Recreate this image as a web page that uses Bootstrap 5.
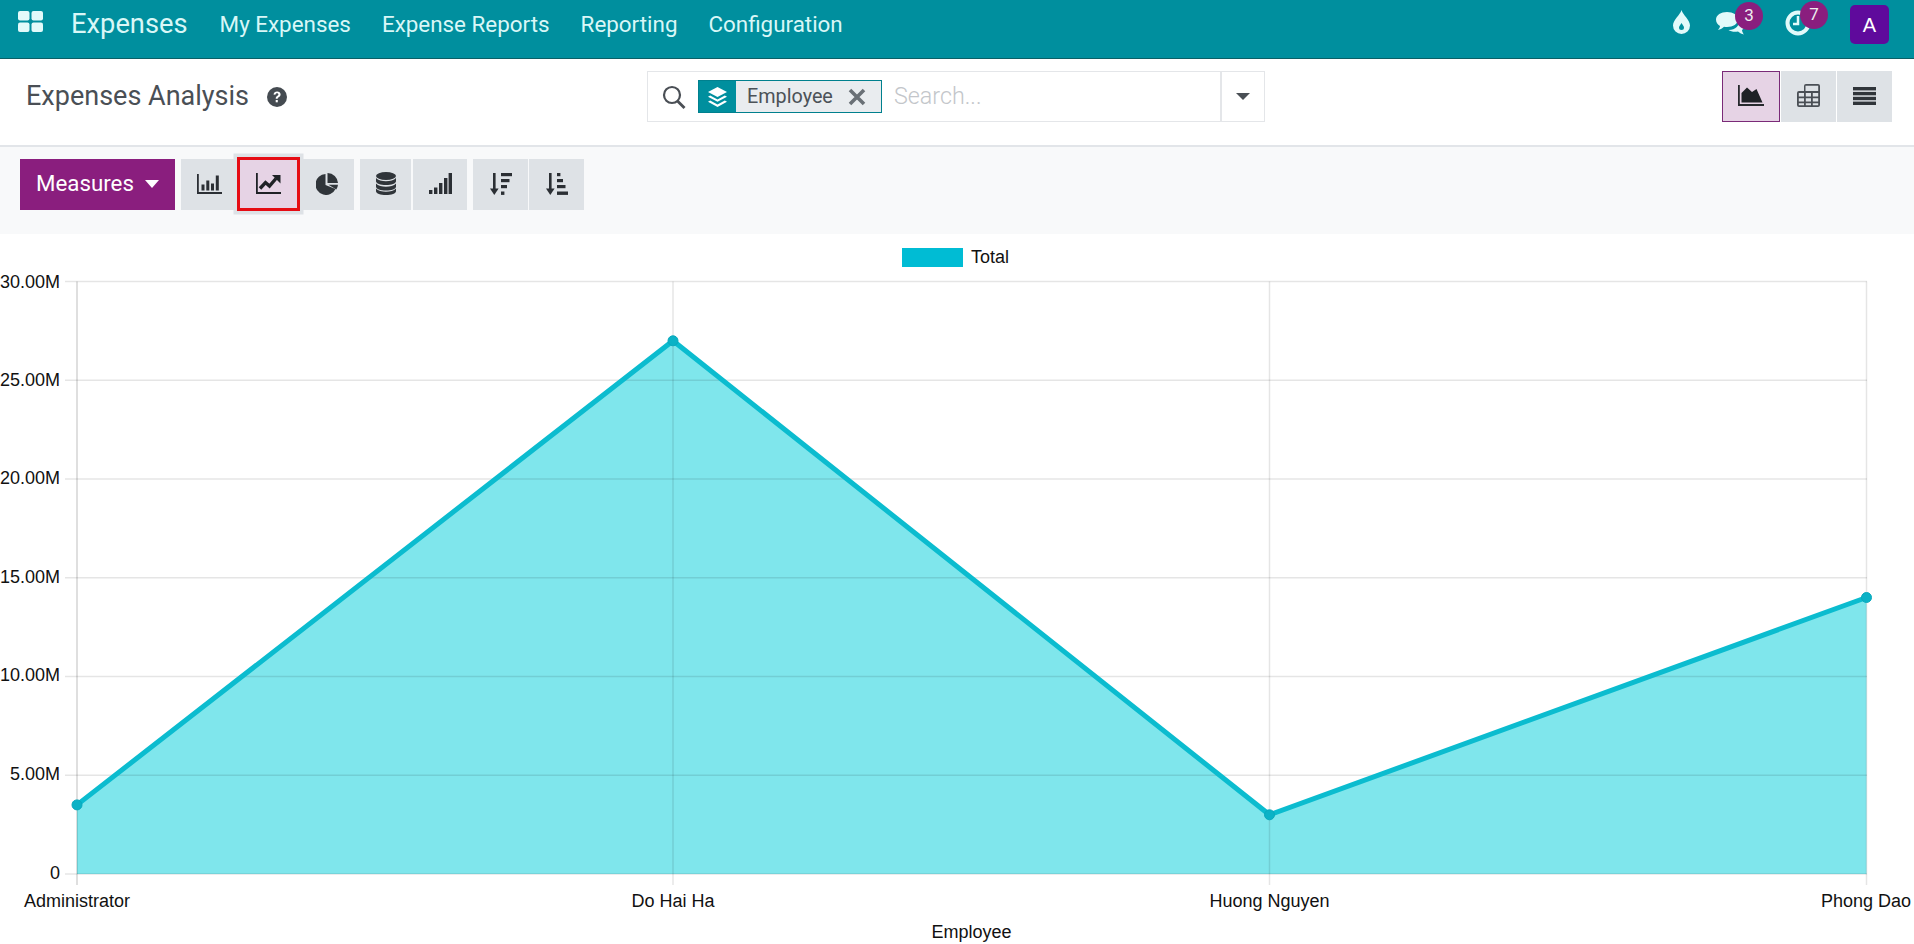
<!DOCTYPE html>
<html lang="en">
<head>
<meta charset="utf-8">
<title>Expenses Analysis</title>
<link rel="stylesheet" href="https://cdn.jsdelivr.net/npm/bootstrap@5.3.0/dist/css/bootstrap.min.css">
<style>
html,body{height:100%;overflow:hidden}
body{font-family:Roboto,"Liberation Sans",sans-serif;background:#fff;color:#4c4c4c}
.topbar{height:59px;background:#008f9e;border-bottom:1px solid #0b5f66;color:#d9f7f7;padding:0}
.topbar .navbar-nav{gap:0;align-self:start}
.apps{width:71px;height:58px;padding:9px 0 0 18px;align-self:start;display:block}
.app-name{font-size:27.300px;font-weight:400;color:#d9f7f7;padding:0;margin:0 32px 0 0;line-height:48px;align-self:start}
.menu-link{font-size:22.400px;font-weight:400;color:#d9f7f7!important;padding:0!important;margin-right:31px;line-height:48px}
.tray{align-self:start;position:relative;height:58px;width:241px;flex:none}
.tray-item{position:absolute}
.drop{left:0;top:10px}
.chat{left:43px;top:12px}
.clock{left:112px;top:10px}
.tray-badge{position:absolute;width:28px;height:28px;border-radius:50%;background:#8a1e7e;color:#eee;font-size:17px;line-height:26px;text-align:center;padding:0}
.b3{left:62px;top:2px}
.b7{left:127px;top:1px}
.avatar{position:absolute;left:177px;top:5px;width:39px;height:39px;border-radius:5px;background:#5f0a9c;color:#fff;font-size:20px;line-height:40px;text-align:center;font-family:"Liberation Sans",sans-serif}
.panel-top{height:88px;border-bottom:2px solid #e2e5e9;display:grid;grid-template-columns:647px 618px 1fr;align-items:start;padding-top:12px}
.page-title{font-size:27px;font-weight:400;color:#4a4f55;margin:0;padding-left:26px;line-height:51px;display:flex;align-items:center;gap:18px}
.search-box{height:51px;border:1.500px solid #e4e6e9;display:flex;align-items:stretch;background:#fff}
.search-ico{width:50px;flex:none;padding:12px 0 0 14px}
.facet{height:33px;margin-top:8px;border:1px solid #00808e;display:flex;flex:none;width:184px;background:#e9ecef;color:#4c5258}
.facet-ico{width:37px;background:#008f9e;display:flex;align-items:center;justify-content:center;flex:none}
.facet-txt{font-size:19.800px;line-height:31px;padding-left:11px;width:105px;flex:none}
.facet-x{display:flex;align-items:center;padding-left:7px}
.search-input.form-control{border:0;border-radius:0;font-size:23.300px;font-weight:300;padding:0 0 0 12px;box-shadow:none;background:transparent;font-family:Roboto,sans-serif;flex:1;min-width:0}
.search-input::placeholder{color:#c3c6ca;opacity:1}
.search-caret{width:44px;flex:none;border-left:2px solid #e4e6e9;display:flex;align-items:center;justify-content:center}
.caret-d{width:0;height:0;border-left:7px solid transparent;border-right:7px solid transparent;border-top:7px solid #4a4f55}
.caret-w{width:0;height:0;border-left:7.500px solid transparent;border-right:7.500px solid transparent;border-top:8px solid #fff;margin-left:11px}
.views{display:flex;justify-content:flex-end;padding-right:22px}
.tool{--bs-btn-bg:#dee2e6;--bs-btn-hover-bg:#dee2e6;--bs-btn-border-color:transparent;--bs-btn-hover-border-color:transparent;--bs-btn-padding-x:0;--bs-btn-padding-y:0;height:51px;display:flex;align-items:center;justify-content:center;background:#dee2e6;border:0;padding-bottom:2px}
.view-on{width:58px;background:#e6d3e5;border:1.500px solid #7a2a78}
.w55{width:55px}
.v-gap{margin-left:1px!important}
.tools{background:#f8f9fa;height:87px;padding:12px 0 0 20px;display:flex;align-items:flex-start}
.measures.btn{width:155px;height:51px;background:#8a1e7e;color:#fff;border:0;font-size:22.300px;font-weight:400;padding:0 0 2px 0;display:flex;align-items:center;justify-content:center}
.g1,.g2,.g3{margin-left:6px}
.w56{width:56px}
.w54{width:54px}
.w51{width:51px}
.w52{width:54px}
.w-sort{width:55px}
.tool-mark.tool{width:63px;height:54px;margin-top:-2px;background:#e6d3e5;border:3px solid #e60c14;box-shadow:0 0 0 3.500px #dee2e6;position:relative;z-index:1}
.gap2{margin-left:2px!important}
.gap1{margin-left:1px!important}
.chart-area{display:block;width:1914px;height:710px}
.chart-area text{font-family:"Liberation Sans",Arial,sans-serif;font-size:18px;fill:#111}
</style>
</head>
<body>
<nav class="navbar navbar-expand topbar">
  <a class="apps" href="#" aria-label="Apps">
    <svg width="25" height="21" viewBox="0 0 25 21"><g fill="#e2fafa"><rect x="0" y="0" width="11.500" height="9.500" rx="2"/><rect x="13.500" y="0" width="11.500" height="9.500" rx="2"/><rect x="0" y="11.500" width="11.500" height="9.500" rx="2"/><rect x="13.500" y="11.500" width="11.500" height="9.500" rx="2"/></g></svg>
  </a>
  <a class="navbar-brand app-name" href="#">Expenses</a>
  <ul class="navbar-nav">
    <li class="nav-item"><a class="nav-link menu-link" href="#">My Expenses</a></li>
    <li class="nav-item"><a class="nav-link menu-link" href="#">Expense Reports</a></li>
    <li class="nav-item"><a class="nav-link menu-link" href="#">Reporting</a></li>
    <li class="nav-item"><a class="nav-link menu-link" href="#">Configuration</a></li>
  </ul>
  <div class="tray ms-auto">
    <svg class="tray-item drop" width="17" height="24" viewBox="0 0 17 24"><path fill="#e2fafa" fill-rule="evenodd" d="M8.500 0C10 5 17 10 17 15.500A8.500 8.500 0 0 1 0 15.500C0 10 7 5 8.500 0zM8.500 13c-1 2-2.500 3-2.500 4.500a2.500 2.500 0 0 0 5 0C11 16 9.500 15 8.500 13z"/></svg>
    <svg class="tray-item chat" width="29" height="24" viewBox="0 0 29 24"><path fill="#e2fafa" d="M11 0c6 0 11 3 11 7.500S17 15 11 15c-1 0-2 0-3-.3C6 16.500 4 17.500 2 18c1-1.200 1.800-2.400 2-4C1.500 12.600 0 10.200 0 7.500 0 3 5 0 11 0z"/><path fill="#e2fafa" d="M24 7c3 1.300 5 3.400 5 6 0 2-1.200 3.800-3 5 .2 1.500.8 3 2 4.500-2.200-.4-4.200-1.500-6-3-1 .2-2 .3-3 .3-2.500 0-4.800-.7-6.500-1.800 6.500.2 11.500-4.500 11.500-11z"/></svg>
    <span class="tray-badge b3">3</span>
    <svg class="tray-item clock" width="26" height="26" viewBox="0 0 26 26"><circle cx="13" cy="13" r="10.500" fill="none" stroke="#e2fafa" stroke-width="4"/><path d="M13 6v8H8" fill="none" stroke="#e2fafa" stroke-width="2.500"/></svg>
    <span class="tray-badge b7">7</span>
    <span class="avatar">A</span>
  </div>
</nav>

<div class="panel-top">
  <h1 class="page-title">Expenses Analysis
    <svg width="20" height="20" viewBox="0 0 20 20"><circle cx="10" cy="10" r="10" fill="#454b51"/><path d="M6.500 7.600C6.800 5.600 8.200 4.500 10.100 4.500c2 0 3.500 1.200 3.500 3 0 2.600-2.900 2.500-2.900 4.300H8.700c0-3 2.700-2.900 2.700-4.300 0-.8-.6-1.200-1.400-1.200-.9 0-1.400.5-1.600 1.500z" fill="#fff"/><rect x="8.700" y="13" width="2.100" height="2.300" fill="#fff"/></svg>
  </h1>
  <div class="search-box">
    <div class="search-ico"><svg width="24" height="24" viewBox="0 0 24 24"><circle cx="10" cy="10" r="8" fill="none" stroke="#4a4f55" stroke-width="2.200"/><path d="M15.500 16l7 7" stroke="#4a4f55" stroke-width="2.800"/></svg></div>
    <div class="facet">
      <span class="facet-ico"><svg width="19" height="20" viewBox="0 0 19 20"><path fill="#fff" d="M9.500 0l9.500 5-9.500 5L0 5z"/><path fill="#fff" d="M2.200 8.500L9.500 12.400l7.300-3.900L19 9.800l-9.500 5-9.500-5z"/><path fill="#fff" d="M2.200 13.500L9.500 17.400l7.300-3.900L19 14.800 9.500 20 0 14.800z"/></svg></span>
      <span class="facet-txt">Employee</span>
      <span class="facet-x"><svg width="18" height="18" viewBox="0 0 18 18"><path d="M2 2l14 14M16 2L2 16" stroke="#6a7076" stroke-width="3.600"/></svg></span>
    </div>
    <input class="form-control search-input" type="text" placeholder="Search..." aria-label="Search">
    <div class="search-caret"><span class="caret-d"></span></div>
  </div>
  <div class="views">
    <div class="btn-group" role="group" aria-label="Views">
      <button class="btn tool view-on rounded-0" type="button" aria-label="Graph"><svg width="26" height="21" viewBox="0 0 26 21"><path fill="#26292d" d="M0 0h1.800v19H26v2H0z"/><path fill="#1f2226" d="M3.500 17.500V8L9 2.500 14 7l4.500-3L24.500 17.500z"/></svg></button>
      <button class="btn tool w55 v-gap rounded-0" type="button" aria-label="Pivot"><svg width="23" height="23" viewBox="0 0 23 23"><path fill="#4a4f55" fill-rule="evenodd" d="M7 0h14a2 2 0 0 1 2 2v19a2 2 0 0 1-2 2H2a2 2 0 0 1-2-2V9a2 2 0 0 1 2-2h5V2a2 2 0 0 1 2-2zM8.500 1.800V7h12.700V1.800zM1.800 9v3.500H7V9zm7 0v3.500H14V9zm7 0v3.500h5.400V9zm-14 5.300V17.500H7v-3.200zm7 0v3.200H14v-3.200zm7 0v3.200h5.400v-3.200zm-14 5v1.900H7v-1.900zm7 0v1.900H14v-1.900zm7 0v1.900h5.400v-1.900z"/></svg></button>
      <button class="btn tool w55 v-gap rounded-0" type="button" aria-label="List"><svg width="23" height="18" viewBox="0 0 23 18"><g fill="#30353a"><rect width="23" height="3.400"/><rect y="4.900" width="23" height="3.400"/><rect y="9.800" width="23" height="3.400"/><rect y="14.600" width="23" height="3.400"/></g></svg></button>
    </div>
  </div>
</div>

<div class="tools">
  <button class="btn measures rounded-0" type="button">Measures<span class="caret-w"></span></button>
  <div class="btn-group g1" role="group" aria-label="Chart type">
    <button class="btn tool w56 rounded-0" type="button" aria-label="Bar chart"><svg width="25" height="20" viewBox="0 0 25 20"><g fill="#2b2f34"><path d="M0 0h1.800v18H25v2H0z"/><rect x="4.500" y="10.500" width="3" height="6"/><rect x="9.300" y="6.500" width="3" height="10"/><rect x="14" y="9.500" width="3" height="7"/><rect x="18.800" y="1.500" width="3" height="15"/></g></svg></button>
    <button class="btn tool tool-mark ms-0 rounded-0" type="button" aria-label="Line chart"><svg width="25" height="21" viewBox="0 0 25 21"><path fill="#1f2226" d="M0 0h1.800v19H25v2H0z"/><path d="M4 15.500l5.500-6 4 3.500 6.500-7.500" fill="none" stroke="#1f2226" stroke-width="3.400"/><path fill="#1f2226" d="M16 2H24.500V10.500z"/></svg></button>
    <button class="btn tool w54 ms-0 rounded-0" type="button" aria-label="Pie chart"><svg width="22" height="22" viewBox="0 0 22 22"><g fill="#30353a"><path d="M9.500 1A10.500 10.500 0 1 0 19.500 16L9.500 12z"/><path d="M11.500 0A10.500 10.500 0 0 1 22 10H11.500z"/><path d="M12.500 11.800H22a10.500 10.500 0 0 1-1.700 4.700z"/></g></svg></button>
  </div>
  <div class="btn-group g2" role="group" aria-label="Stacking">
    <button class="btn tool w51 rounded-0" type="button" aria-label="Stacked"><svg width="20" height="23" viewBox="0 0 20 23"><g fill="#30353a"><ellipse cx="10" cy="4" rx="10" ry="4"/><path d="M0 6c2 2.300 6 3.300 10 3.300S18 8.300 20 6v3.200c0 2.200-4.500 3.800-10 3.800S0 11.400 0 9.200z"/><path d="M0 11.500c2 2.300 6 3.300 10 3.300s8-1 10-3.300v3.200c0 2.200-4.500 3.800-10 3.800S0 16.900 0 14.700z"/><path d="M0 16.500c2 2.300 6 3.300 10 3.300s8-1 10-3.300v2.700c0 2.200-4.500 3.800-10 3.800S0 21.400 0 19.200z"/></g></svg></button>
    <button class="btn tool w52 gap2 rounded-0" type="button" aria-label="Cumulative"><svg width="23" height="21" viewBox="0 0 23 21"><g fill="#2b2f34"><rect y="17" width="3.400" height="4"/><rect x="5" y="14.500" width="3.400" height="6.500"/><rect x="10" y="10" width="3.400" height="11"/><rect x="15" y="5" width="3.400" height="16"/><rect x="19.600" y="0" width="3.400" height="21"/></g></svg></button>
  </div>
  <div class="btn-group g3" role="group" aria-label="Sorting">
    <button class="btn tool w-sort rounded-0" type="button" aria-label="Descending"><svg width="22" height="22" viewBox="0 0 22 22"><g fill="#2b2f34"><rect x="3" y="0" width="2.600" height="17"/><path d="M0 15.500h8.600L4.300 22z"/><rect x="11" y="0" width="11" height="3.200"/><rect x="11" y="6" width="8.500" height="3.200"/><rect x="11" y="12" width="6" height="3.200"/><rect x="11" y="18.500" width="3.400" height="3.400"/></g></svg></button>
    <button class="btn tool w-sort gap1 rounded-0" type="button" aria-label="Ascending"><svg width="22" height="22" viewBox="0 0 22 22"><g fill="#2b2f34"><rect x="3" y="0" width="2.600" height="17"/><path d="M0 15.500h8.600L4.300 22z"/><rect x="11" y="0" width="3.400" height="3.200"/><rect x="11" y="6" width="6" height="3.200"/><rect x="11" y="12" width="8.500" height="3.200"/><rect x="11" y="18.500" width="11" height="3.400"/></g></svg></button>
  </div>
</div>

<svg class="chart-area" viewBox="0 234 1914 710" role="img" aria-label="Expenses by employee">
  <rect x="902" y="248" width="61" height="19" fill="#00bcd4"/>
  <text x="971" y="263">Total</text>
  <path d="M77 804.900L673 340.800 1269.500 814.800 1866.500 597.500V874H77Z" fill="#00cdd9" fill-opacity=".5"/>
  <g stroke="#000" stroke-opacity=".1" stroke-width="1.500">
    <path d="M65 281.500H1867M65 380.300H1867M65 479H1867M65 577.800H1867M65 676.500H1867M65 775.300H1867M65 874H1867"/>
    <path d="M673 281.500V885M1269.500 281.500V885M1866.500 281.500V885"/>
  </g>
  <path d="M77 281.500V885" stroke="#000" stroke-opacity=".17" stroke-width="1.500"/>
  <path d="M77 804.900L673 340.800 1269.500 814.800 1866.500 597.500" fill="none" stroke="#0bbccf" stroke-width="5"/>
  <g fill="#0bb2c6" stroke="#0aa9bd" stroke-width="1">
    <circle cx="77" cy="804.900" r="5"/><circle cx="673" cy="340.800" r="5"/><circle cx="1269.500" cy="814.800" r="5"/><circle cx="1866.500" cy="597.500" r="5"/>
  </g>
  <g text-anchor="end">
    <text x="60" y="288">30.00M</text>
    <text x="60" y="386">25.00M</text>
    <text x="60" y="484">20.00M</text>
    <text x="60" y="583">15.00M</text>
    <text x="60" y="681">10.00M</text>
    <text x="60" y="780">5.00M</text>
    <text x="60" y="879">0</text>
  </g>
  <g text-anchor="middle">
    <text x="77" y="907">Administrator</text>
    <text x="673" y="907">Do Hai Ha</text>
    <text x="1269.500" y="907">Huong Nguyen</text>
    <text x="1866" y="907">Phong Dao</text>
    <text x="971.500" y="938">Employee</text>
  </g>
</svg>
</body>
</html>
